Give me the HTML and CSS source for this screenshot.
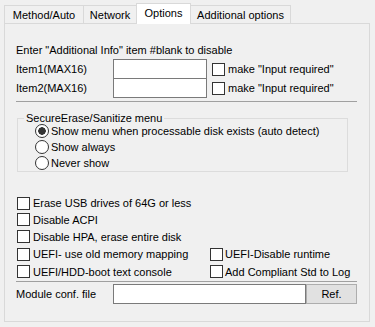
FILE: index.html
```html
<!DOCTYPE html>
<html lang="en">
<head>
    <meta charset="UTF-8">
    <title>Options</title>
    <link rel="stylesheet" href="styles.css">
</head>
<body>
    <!-- tab strip -->
    <div class="tabs">
        <div class="tab tab-method">Method/Auto</div>
        <div class="tab tab-network">Network</div>
        <div class="tab tab-options selected">Options</div>
        <div class="tab tab-additional">Additional options</div>
    </div>

    <div class="panel">
        <p class="info">Enter "Additional Info" item #blank to disable</p>

        <div class="item-row">
            <span class="item-label">Item1(MAX16)</span>
            <input type="text" class="item-input">
            <label class="opt"><input type="checkbox"> make "Input required"</label>
        </div>
        <div class="item-row second">
            <span class="item-label">Item2(MAX16)</span>
            <input type="text" class="item-input">
            <label class="opt"><input type="checkbox"> make "Input required"</label>
        </div>

        <div class="sep"></div>

        <fieldset class="group">
            <legend>SecureErase/Sanitize menu</legend>
            <div class="radios">
                <label class="opt"><input type="radio" name="menu" checked> Show menu when processable disk exists (auto detect)</label>
                <label class="opt"><input type="radio" name="menu"> Show always</label>
                <label class="opt"><input type="radio" name="menu"> Never show</label>
            </div>
        </fieldset>

        <div class="checks">
            <label class="opt wide"><input type="checkbox"> Erase USB drives of 64G or less</label>
            <label class="opt wide"><input type="checkbox"> Disable ACPI</label>
            <label class="opt wide"><input type="checkbox"> Disable HPA, erase entire disk</label>
            <label class="opt"><input type="checkbox"> UEFI- use old memory mapping</label>
            <label class="opt right"><input type="checkbox"> UEFI-Disable runtime</label>
            <label class="opt"><input type="checkbox"> UEFI/HDD-boot text console</label>
            <label class="opt right"><input type="checkbox"> Add Compliant Std to Log</label>
        </div>

        <div class="sep lower"></div>

        <div class="module-row">
            <span class="item-label">Module conf. file</span>
            <input type="text" class="module-input">
            <button type="button" class="ref-btn">Ref.</button>
        </div>
    </div>
</body>
</html>
```

FILE: styles.css
```css
body {
    font-family: "Liberation Sans", Arial, sans-serif;
    font-size: 11px;
    color: #000;
    background-color: #f0f0f0;
    margin: 0;
}

/* tabs */
.tabs {
    display: flex;
    align-items: flex-end;
    padding: 3px 0 0 4px;
}

.tab {
    box-sizing: border-box;
    height: 18px;
    line-height: 18px;
    border: 1px solid #d9d9d9;
    border-bottom: none;
    background-color: #f0f0f0;
    text-align: center;
    margin-left: -1px;
}

.tab-method {
    width: 80px;
    margin-left: 0;
}

.tab-network {
    width: 54px;
}

.tab-options {
    width: 55px;
}

.tab-additional {
    width: 101px;
}

.tab.selected {
    height: 21px;
    line-height: 18px;
    margin-bottom: -1px;
    background-color: #fff;
    position: relative;
    z-index: 1;
}

.panel {
    box-sizing: border-box;
    width: 366px;
    height: 299px;
    margin-left: 4px;
    padding: 19px 0 0 11px;
    border: 1px solid #d9d9d9;
    background-color: #f0f0f0;
}

.info {
    margin: 0;
    line-height: 14px;
}

/* item rows */
.item-row {
    display: flex;
    align-items: center;
    height: 20px;
    margin-top: 2px;
}

.item-row.second {
    margin-top: -1px;
}

.item-label {
    width: 97px;
}

.item-input {
    box-sizing: border-box;
    width: 94px;
    height: 20px;
    margin: 0 5px 0 0;
    border: 1px solid #7a7a7a;
    background: #fff;
    padding: 0 3px;
}

.opt {
    display: flex;
    align-items: center;
    gap: 3px;
    white-space: nowrap;
}

input[type="checkbox"],
input[type="radio"] {
    appearance: none;
    box-sizing: border-box;
    width: 13px;
    height: 13px;
    margin: 0;
    border: 1px solid #333;
    background: #fff;
    flex: none;
}

input[type="radio"] {
    width: 14px;
    height: 14px;
    border-radius: 50%;
}

input[type="radio"]:checked {
    background: radial-gradient(circle, #333 0 3.5px, #fff 4px);
}

.sep {
    width: 341px;
    height: 1px;
    margin-top: 3px;
    background-color: #a0a0a0;
}

/* group box */
.group {
    box-sizing: border-box;
    width: 331px;
    margin: 10px 0 0 1px;
    padding: 0;
    border: 1px solid #dcdcdc;
    min-inline-size: 0;
}

.group legend {
    margin-left: 6px;
    padding: 0 2px;
    line-height: 12px;
}

.radios {
    margin-top: -1px;
    padding-left: 17px;
}

.radios .opt {
    height: 16px;
    gap: 2px;
}

/* option checkboxes */
.checks {
    display: grid;
    grid-template-columns: 193px auto;
    grid-template-rows: 16px 17px 17px 18px 17px;
    align-items: center;
    margin: 23px 0 0 1px;
}

.checks .wide {
    grid-column: 1 / 3;
}

.checks .right {
    gap: 2px;
}

.sep.lower {
    margin-top: 1px;
}

.module-row {
    display: flex;
    align-items: center;
    height: 20px;
    margin-top: 2px;
}

.module-input {
    box-sizing: border-box;
    width: 193px;
    height: 20px;
    margin: 0;
    border: 1px solid #7a7a7a;
    background: #fff;
}

.ref-btn {
    box-sizing: border-box;
    width: 51px;
    height: 20px;
    margin: 0;
    border: 1px solid #adadad;
    background-color: #e1e1e1;
    font-family: inherit;
    font-size: 11px;
    color: #000;
    padding: 0;
}
```
